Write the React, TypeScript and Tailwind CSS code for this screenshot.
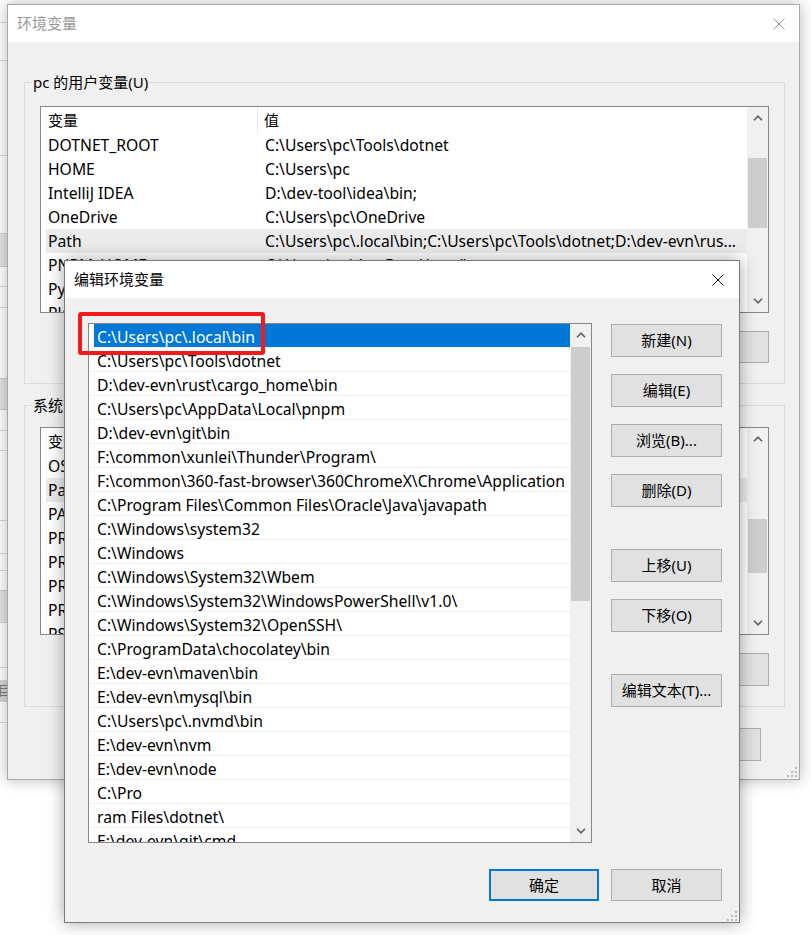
import React from "react";

const pathEntries = [
  "C:\\Users\\pc\\.local\\bin",
  "C:\\Users\\pc\\Tools\\dotnet",
  "D:\\dev-evn\\rust\\cargo_home\\bin",
  "C:\\Users\\pc\\AppData\\Local\\pnpm",
  "D:\\dev-evn\\git\\bin",
  "F:\\common\\xunlei\\Thunder\\Program\\",
  "F:\\common\\360-fast-browser\\360ChromeX\\Chrome\\Application",
  "C:\\Program Files\\Common Files\\Oracle\\Java\\javapath",
  "C:\\Windows\\system32",
  "C:\\Windows",
  "C:\\Windows\\System32\\Wbem",
  "C:\\Windows\\System32\\WindowsPowerShell\\v1.0\\",
  "C:\\Windows\\System32\\OpenSSH\\",
  "C:\\ProgramData\\chocolatey\\bin",
  "E:\\dev-evn\\maven\\bin",
  "E:\\dev-evn\\mysql\\bin",
  "C:\\Users\\pc\\.nvmd\\bin",
  "E:\\dev-evn\\nvm",
  "E:\\dev-evn\\node",
  "C:\\Pro",
  "ram Files\\dotnet\\",
  "E:\\dev-evn\\git\\cmd",
];

const userVars = [
  ["DOTNET_ROOT", "C:\\Users\\pc\\Tools\\dotnet"],
  ["HOME", "C:\\Users\\pc"],
  ["IntelliJ IDEA", "D:\\dev-tool\\idea\\bin;"],
  ["OneDrive", "C:\\Users\\pc\\OneDrive"],
  ["Path", "C:\\Users\\pc\\.local\\bin;C:\\Users\\pc\\Tools\\dotnet;D:\\dev-evn\\rus..."],
  ["PNPM_HOME", "C:\\Users\\pc\\AppData\\Local\\pnpm"],
  ["PyCharm", "D:\\dev-tool\\pycharm\\bin;"],
  ["PlaywrightPath", "C:\\Users\\pc\\AppData"],
];

const systemVars = [
  ["OS", "Windows_NT"],
  ["Path", "C:\\Program Files\\Common Files\\Oracle\\Java\\javapath"],
  ["PATHEXT", ".COM;.EXE;.BAT;.CMD;.VBS;.VBE;.JS"],
  ["PROCESSOR_ARCHITECTURE", "AMD64"],
  ["PROCESSOR_IDENTIFIER", "Intel64 Family 6"],
  ["PROCESSOR_LEVEL", "6"],
  ["PROCESSOR_REVISION", "9a03"],
  ["PSModulePath", "%ProgramFiles%\\WindowsPowerShell\\Modules"],
];

function ChevronUp() {
  return (
    <svg width="10" height="6" viewBox="0 0 10 6">
      <path d="M1 5.2L5 1.2L9 5.2" fill="none" stroke="#606060" strokeWidth="1.6" />
    </svg>
  );
}

function ChevronDown() {
  return (
    <svg width="10" height="6" viewBox="0 0 10 6">
      <path d="M1 0.8L5 4.8L9 0.8" fill="none" stroke="#606060" strokeWidth="1.6" />
    </svg>
  );
}

function CloseX({ color }: { color: string }) {
  return (
    <svg width="12" height="12" viewBox="0 0 12 12">
      <path d="M0.5 0.5L11.5 11.5M11.5 0.5L0.5 11.5" stroke={color} strokeWidth="1" />
    </svg>
  );
}

function Grip() {
  return (
    <svg width="10" height="10" viewBox="0 0 10 10">
      <g fill="#bcbcbc">
        <rect x="8" y="0" width="2" height="2" />
        <rect x="4" y="4" width="2" height="2" />
        <rect x="8" y="4" width="2" height="2" />
        <rect x="0" y="8" width="2" height="2" />
        <rect x="4" y="8" width="2" height="2" />
        <rect x="8" y="8" width="2" height="2" />
      </g>
    </svg>
  );
}

function Scrollbar({ thumb }: { thumb: string }) {
  return (
    <div className="flex w-[21px] shrink-0 flex-col bg-[#f0f0f0]">
      <div className="flex h-[22px] items-center justify-center">
        <ChevronUp />
      </div>
      <div className="flex-1">
        <div className={`ml-[1px] mr-[1px] bg-[#cdcdcd] ${thumb}`} />
      </div>
      <div className="flex h-[22px] items-center justify-center">
        <ChevronDown />
      </div>
    </div>
  );
}

function Btn({ children, className = "" }: { children?: React.ReactNode; className?: string }) {
  return (
    <button
      type="button"
      className={`flex shrink-0 items-center justify-center bg-[#e1e1e1] text-[15px] text-black ${className}`}
    >
      {children}
    </button>
  );
}

function VarList({
  rows,
  highlight,
  thumb,
  height,
}: {
  rows: string[][];
  highlight: string;
  thumb: string;
  height: string;
}) {
  return (
    <div className={`flex border border-[#828790] bg-white ${height}`}>
      <div className="flex-1 overflow-hidden">
        <div className="flex h-[26px] items-center">
          <div className="flex h-full w-[217px] items-center border-r border-[#e5e5e5] pl-[7px]">变量</div>
          <div className="pl-[6px]">值</div>
        </div>
        {rows.map(([name, value]) => (
          <div
            key={name}
            className={`ml-[5px] flex h-[24px] items-center text-[15.7px] leading-[20px] ${
              name === highlight ? "bg-[#ebebeb]" : ""
            }`}
          >
            <div className="w-[219px] shrink-0 overflow-hidden whitespace-nowrap pl-[2px]">{name}</div>
            <div className="overflow-hidden whitespace-nowrap">{value}</div>
          </div>
        ))}
      </div>
      <Scrollbar thumb={thumb} />
    </div>
  );
}

function BackWindow() {
  return (
    <div className="absolute left-[7px] top-[4px] flex h-[776px] w-[793px] flex-col border border-[#a9a9a9] bg-[#f0f0f0] shadow-[0_0_14px_rgba(0,0,0,0.28)]">
      <div className="flex h-[37px] shrink-0 items-center justify-between bg-white pl-[9px] pr-[14px]">
        <span className="text-[15px] text-[#999999]">环境变量</span>
        <CloseX color="#999999" />
      </div>

      <div className="flex flex-col pl-[16px] pr-[14px]">
        <fieldset className="mt-[30px] border border-[#dcdcdc] p-0">
          <legend className="ml-[7px] px-[1px] text-[15px] leading-[20px]">pc 的用户变量(U)</legend>
          <div className="px-[15px] pb-[20px] pt-[14px]">
            <VarList rows={userVars} highlight="Path" thumb="mt-[29px] h-[70px]" height="h-[207px]" />
            <div className="mt-[18px] flex justify-end gap-[12px]">
              <Btn className="h-[32px] w-[110px] border border-[#adadad]">新建(N)...</Btn>
              <Btn className="h-[32px] w-[110px] border border-[#adadad]">编辑(E)...</Btn>
              <Btn className="h-[32px] w-[110px] border border-[#adadad]">删除(D)</Btn>
            </div>
          </div>
        </fieldset>

        <fieldset className="mt-[11px] border border-[#dcdcdc] p-0">
          <legend className="ml-[7px] px-[1px] text-[15px] leading-[20px]">系统变量(S)</legend>
          <div className="px-[15px] pb-[20px] pt-[12px]">
            <VarList rows={systemVars} highlight="Path" thumb="mt-[69px] h-[54px]" height="h-[208px]" />
            <div className="mt-[18px] flex justify-end gap-[12px]">
              <Btn className="h-[33px] w-[110px] border border-[#adadad]">新建(W)...</Btn>
              <Btn className="h-[33px] w-[110px] border border-[#adadad]">编辑(I)...</Btn>
              <Btn className="h-[33px] w-[110px] border border-[#adadad]">删除(L)</Btn>
            </div>
          </div>
        </fieldset>

        <div className="mt-[21px] flex justify-end gap-[12px] pr-[24px]">
          <Btn className="h-[33px] w-[110px] border border-[#adadad]">确定</Btn>
          <Btn className="h-[33px] w-[110px] border border-[#adadad]">取消</Btn>
        </div>
      </div>

      <div className="absolute bottom-[2px] right-[2px]">
        <Grip />
      </div>
    </div>
  );
}

function EditDialog() {
  return (
    <div className="absolute left-[64px] top-[260px] flex h-[663px] w-[676px] flex-col border border-[#7a7a7a] bg-[#f0f0f0] shadow-[0_0_16px_rgba(0,0,0,0.35)]">
      <div className="flex h-[37px] shrink-0 items-center justify-between bg-white pl-[9px] pr-[15px]">
        <span className="text-[15px]">编辑环境变量</span>
        <CloseX color="#111111" />
      </div>

      <div className="flex flex-col pl-[23px] pr-[17px] pt-[25px]">
        <div className="flex items-start gap-[19px]">
          <div className="flex h-[520px] w-[504px] border border-[#828790] bg-white">
            <div className="flex-1 overflow-hidden">
              {pathEntries.map((p, i) => (
                <div key={p} className="h-[24px] border-b border-[#f0f0f0]">
                  <div
                    className={`ml-[5px] flex h-full items-center whitespace-nowrap pl-[3px] pt-[2px] text-[15.7px] leading-[20px] ${
                      i === 0 ? "bg-[#0078d7] text-white" : ""
                    }`}
                  >
                    {p}
                  </div>
                </div>
              ))}
            </div>
            <Scrollbar thumb="mt-[1px] h-[254px]" />
          </div>

          <div className="flex w-[111px] flex-col pt-[1px]">
            <Btn className="h-[33px] w-full border border-[#adadad]">新建(N)</Btn>
            <Btn className="mt-[17px] h-[33px] w-full border border-[#adadad]">编辑(E)</Btn>
            <Btn className="mt-[17px] h-[33px] w-full border border-[#adadad]">浏览(B)...</Btn>
            <Btn className="mt-[17px] h-[33px] w-full border border-[#adadad]">删除(D)</Btn>
            <Btn className="mt-[42px] h-[33px] w-full border border-[#adadad]">上移(U)</Btn>
            <Btn className="mt-[17px] h-[33px] w-full border border-[#adadad]">下移(O)</Btn>
            <Btn className="mt-[42px] h-[33px] w-full border border-[#adadad]">编辑文本(T)...</Btn>
          </div>
        </div>

        <div className="mt-[26px] flex justify-end gap-[12px]">
          <Btn className="h-[32px] w-[110px] border-2 border-[#0078d7]">确定</Btn>
          <Btn className="h-[32px] w-[111px] border border-[#adadad]">取消</Btn>
        </div>
      </div>

      {/* red annotation box */}
      <div className="absolute left-[13px] top-[51px] h-[43px] w-[187px] rounded-[3px] border-[4px] border-[#f41a1a]" />

      <div className="absolute bottom-[1px] right-[2px]">
        <Grip />
      </div>
    </div>
  );
}

function BehindStrip() {
  return (
    <div className="absolute left-0 top-0 flex h-full w-[7px] flex-col bg-white">
      <div className="mt-[22px] h-px bg-[#d9d9d9]" />
      <div className="mt-[37px] h-px bg-[#d9d9d9]" />
      <div className="mt-[94px] h-px bg-[#d9d9d9]" />
      <div className="mt-[77px] h-[34px] border-y border-[#cfcfcf] bg-[#e3e3e3]" />
      <div className="mt-[19px] h-px bg-[#d9d9d9]" />
      <div className="mt-[20px] h-px bg-[#d9d9d9]" />
      <div className="mt-[70px] h-[32px] border-y border-[#cfcfcf] bg-[#e3e3e3]" />
      <div className="mt-[20px] h-px bg-[#d9d9d9]" />
      <div className="mt-[19px] h-px bg-[#d9d9d9]" />
      <div className="mt-[69px] h-px bg-[#d9d9d9]" />
      <div className="mt-[32px] h-px bg-[#d9d9d9]" />
      <div className="mt-[16px] h-px bg-[#d9d9d9]" />
      <div className="mt-[19px] h-[33px] border-y border-[#cfcfcf] bg-[#e3e3e3]" />
      <div className="mt-[44px] h-px bg-[#d9d9d9]" />
      <div className="mt-[12px] flex h-[22px] items-center overflow-hidden whitespace-nowrap bg-[#d4d4d4] text-[13px] text-[#777777]">
        <span className="-ml-[2px]">目(</span>
      </div>
      <div className="mt-[20px] h-px bg-[#d9d9d9]" />
    </div>
  );
}

export default function App() {
  return (
    <div className="relative h-[935px] w-[811px] overflow-hidden bg-white font-['Noto_Sans','Noto_Sans_CJK_SC',sans-serif] text-[15px] text-black">
      <BehindStrip />
      <BackWindow />
      <EditDialog />
    </div>
  );
}
